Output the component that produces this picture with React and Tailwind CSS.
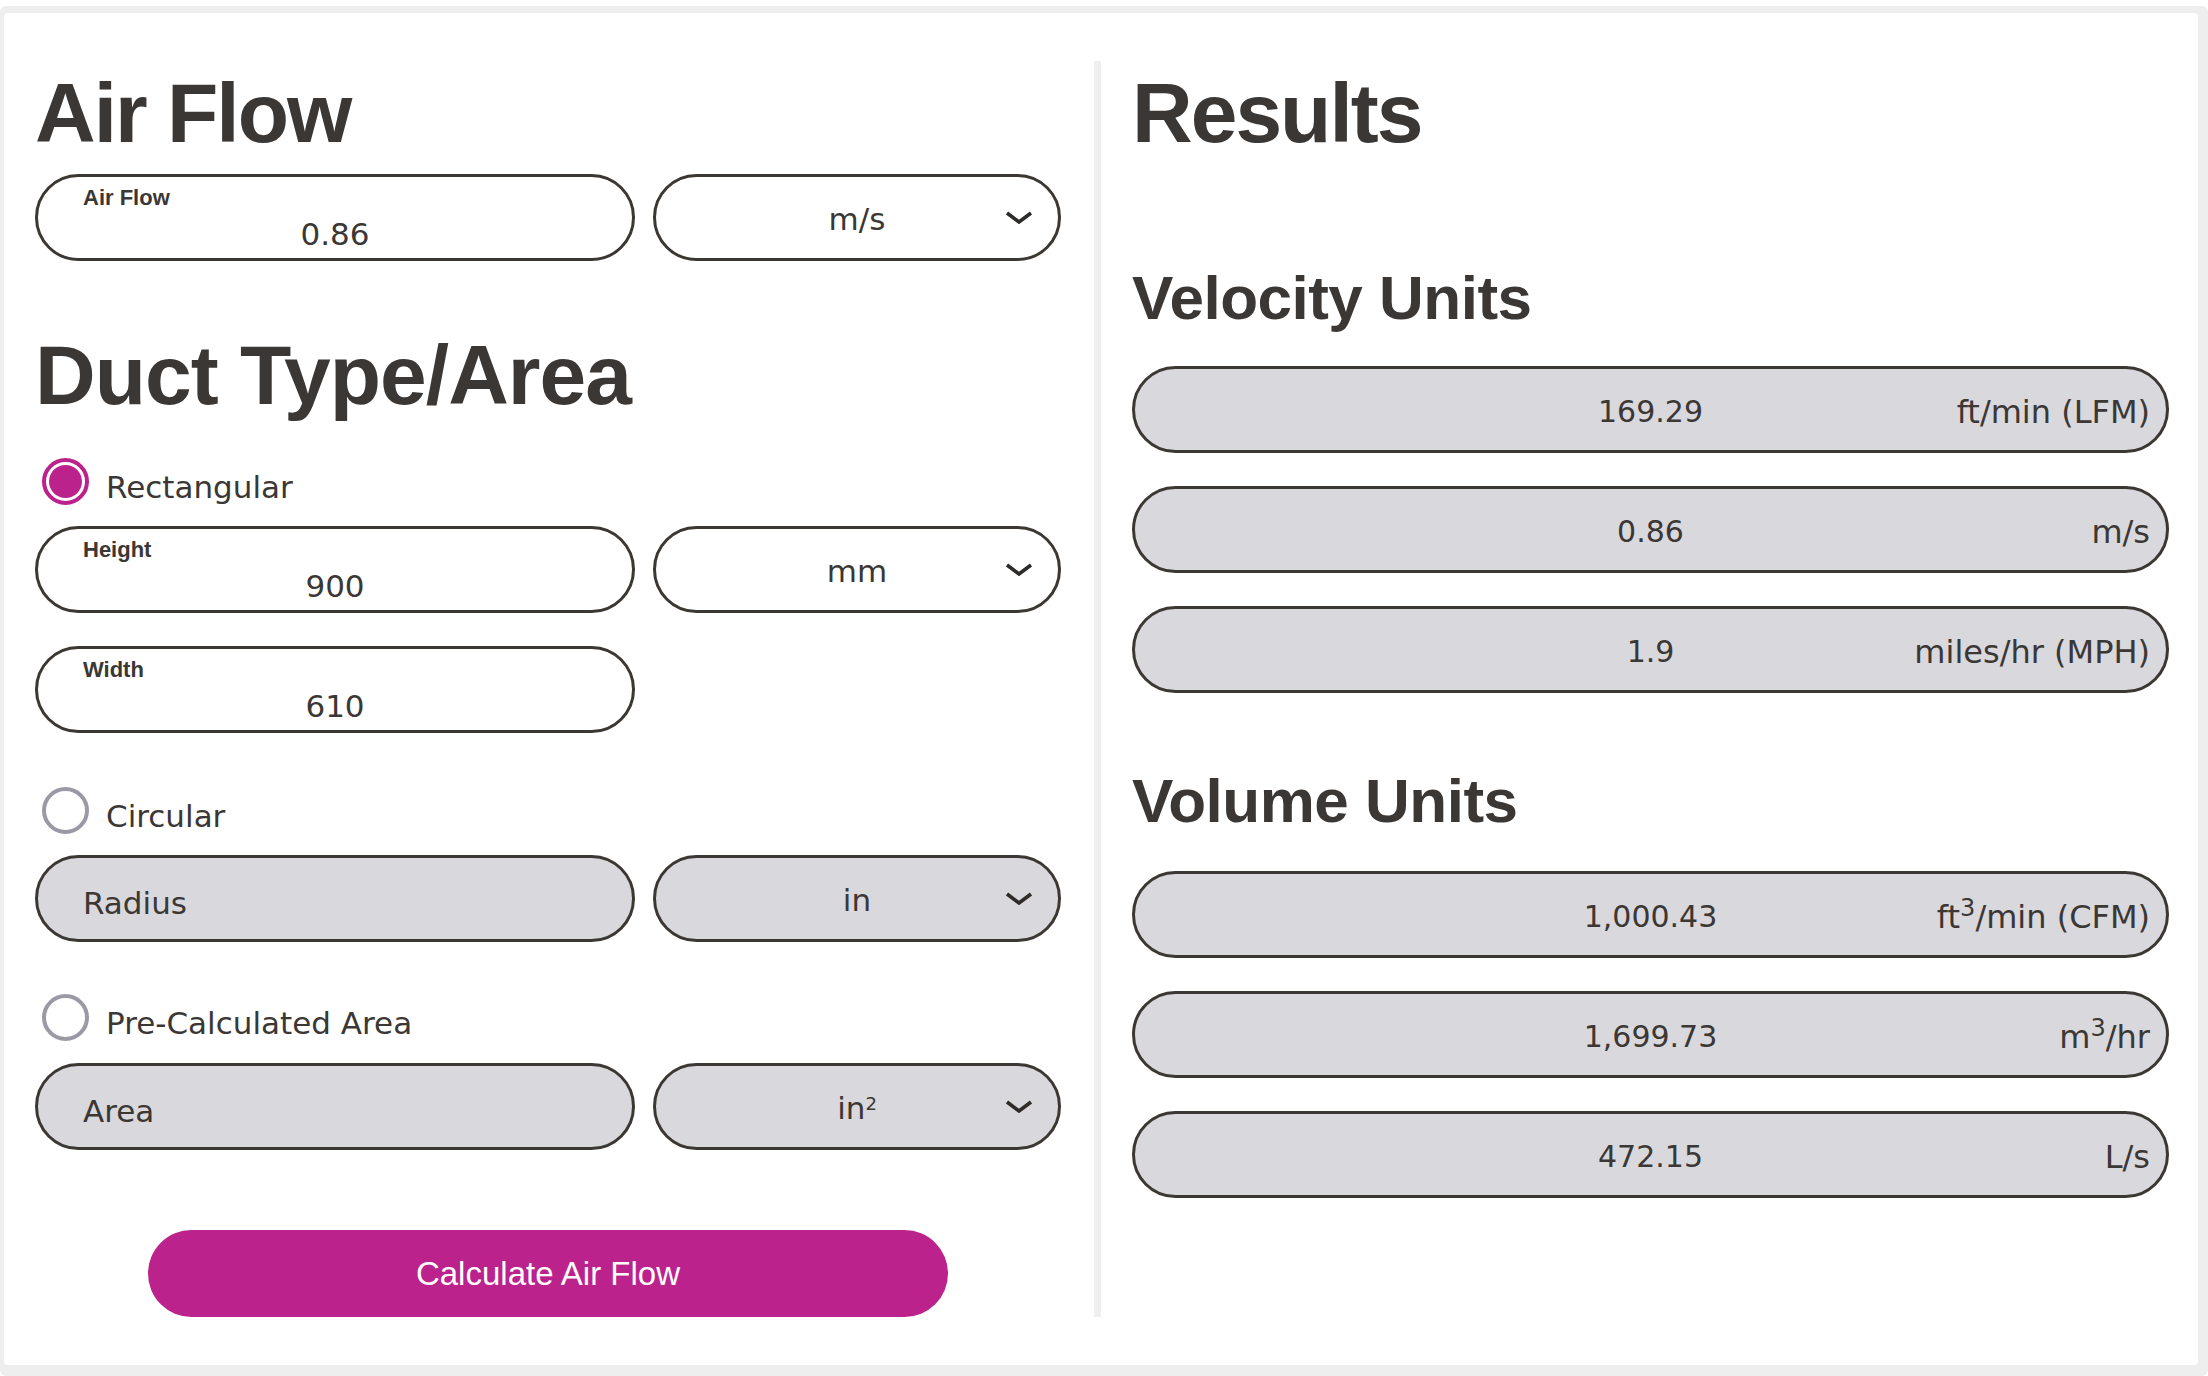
import React from 'react';

const body = "font-['DejaVu_Sans',sans-serif] text-[#3b3734]";
const head = "font-['Liberation_Sans',Arial,sans-serif] font-bold text-[#3b3734] leading-none";

const Chevron = () => (
  <svg width="28" height="13" viewBox="0 0 28 13" fill="none">
    <polyline points="2,2 14,11 26,2" stroke="#2f2b28" strokeWidth="3.6" strokeLinejoin="miter" />
  </svg>
);

// Labelled white input (label top-left, value centered)
const LabelInput = ({ label, value }) => (
  <div className="w-[600px] h-[87px] rounded-full border-[3px] border-[#3b3733] bg-white flex flex-col pt-[10px]">
    <span className={`${head} text-[22px] pl-[45px]`}>{label}</span>
    <span className={`${body} text-[31px] leading-none text-center mt-[10px]`}>{value}</span>
  </div>
);

// Disabled grey input with placeholder
const GreyInput = ({ placeholder }) => (
  <div className="w-[600px] h-[87px] rounded-full border-[3px] border-[#3b3733] bg-[#d9d8dd] flex items-center pt-[9px] pl-[45px]">
    <span className={`${body} text-[31px] leading-none`}>{placeholder}</span>
  </div>
);

const Select = ({ children, grey }) => (
  <div
    className={`w-[408px] h-[87px] rounded-full border-[3px] border-[#3b3733] grid grid-cols-[1fr_auto_1fr] items-center pt-[3px] ${
      grey ? 'bg-[#d9d8dd]' : 'bg-white'
    }`}
  >
    <span />
    <span className={`${body} text-[31px] leading-none`}>{children}</span>
    <span className="justify-self-end pr-[25px] pb-[3px] flex">
      <Chevron />
    </span>
  </div>
);

const Radio = ({ checked, label }) => (
  <div className="flex items-start ml-[7px]">
    {checked ? (
      <div className="w-[47px] h-[47px] rounded-full border-[4px] border-[#bc228c] p-[3px]">
        <div className="w-full h-full rounded-full bg-[#bc228c]" />
      </div>
    ) : (
      <div className="w-[47px] h-[47px] rounded-full border-[4px] border-[#9b99a6]" />
    )}
    <span className={`${body} text-[31px] leading-none ml-[17px] mt-[14px]`}>{label}</span>
  </div>
);

const ResultRow = ({ value, unit }) => (
  <div className="w-full h-[87px] rounded-full border-[3px] border-[#3b3733] bg-[#d9d8dd] grid grid-cols-[1fr_auto_1fr] items-center pt-[5px] px-[16px]">
    <span />
    <span className={`${body} text-[30px] leading-none`}>{value}</span>
    <span className={`${body} text-[32px] leading-none justify-self-end whitespace-nowrap`}>{unit}</span>
  </div>
);

const velocity = [
  { value: '169.29', unit: 'ft/min (LFM)' },
  { value: '0.86', unit: 'm/s' },
  { value: '1.9', unit: 'miles/hr (MPH)' },
];

const volume = [
  { value: '1,000.43', unit: <>ft<sup>3</sup>/min (CFM)</> },
  { value: '1,699.73', unit: <>m<sup>3</sup>/hr</> },
  { value: '472.15', unit: 'L/s' },
];

const App = () => {
  return (
    <div className="w-[2208px] h-[1376px] overflow-hidden bg-white">
      <div className="mt-[6px] h-[1370px] bg-[#eeeeee] rounded-[6px] pt-[7px] pl-[4px] pr-[10px] pb-[11px]">
        <div className="h-full bg-white rounded-[4px] flex items-start">
          {/* Inputs */}
          <div className="w-[1026px] ml-[31px] pt-[58px] flex flex-col">
            <h1 className={`${head} text-[84px] tracking-[-2px]`}>Air Flow</h1>
            <div className="flex gap-[18px] mt-[19px]">
              <LabelInput label="Air Flow" value="0.86" />
              <Select>m/s</Select>
            </div>

            <h1 className={`${head} text-[84px] tracking-[-1px] mt-[72px]`}>Duct Type/Area</h1>

            <div className="mt-[41px]">
              <Radio checked label="Rectangular" />
            </div>
            <div className="flex gap-[18px] mt-[21px]">
              <LabelInput label="Height" value="900" />
              <Select>mm</Select>
            </div>
            <div className="mt-[33px]">
              <LabelInput label="Width" value="610" />
            </div>

            <div className="mt-[54px]">
              <Radio label="Circular" />
            </div>
            <div className="flex gap-[18px] mt-[21px]">
              <GreyInput placeholder="Radius" />
              <Select grey>in</Select>
            </div>

            <div className="mt-[52px]">
              <Radio label="Pre-Calculated Area" />
            </div>
            <div className="flex gap-[18px] mt-[22px]">
              <GreyInput placeholder="Area" />
              <Select grey>
                in<sup className="text-[18px]">2</sup>
              </Select>
            </div>

            <button className="mt-[80px] mx-auto w-[800px] h-[87px] rounded-full bg-[#bc228c] text-white font-['Liberation_Sans',Arial,sans-serif] text-[33px] leading-none">
              Calculate Air Flow
            </button>
          </div>

          {/* Divider */}
          <div className="w-[7px] h-[1256px] mt-[48px] ml-[33px] bg-[#efefef]" />

          {/* Results */}
          <div className="w-[1037px] ml-[31px] pt-[58px] flex flex-col">
            <h1 className={`${head} text-[84px] tracking-[-2px]`}>Results</h1>

            <h2 className={`${head} text-[62px] tracking-[-0.5px] mt-[112px]`}>Velocity Units</h2>
            <div className="flex flex-col gap-[33px] mt-[37px]">
              {velocity.map((r) => (
                <ResultRow key={r.unit} value={r.value} unit={r.unit} />
              ))}
            </div>

            <h2 className={`${head} text-[62px] tracking-[-0.5px] mt-[77px]`}>Volume Units</h2>
            <div className="flex flex-col gap-[33px] mt-[39px]">
              {volume.map((r) => (
                <ResultRow key={r.value} value={r.value} unit={r.unit} />
              ))}
            </div>
          </div>
        </div>
      </div>
    </div>
  );
};

export default App;
